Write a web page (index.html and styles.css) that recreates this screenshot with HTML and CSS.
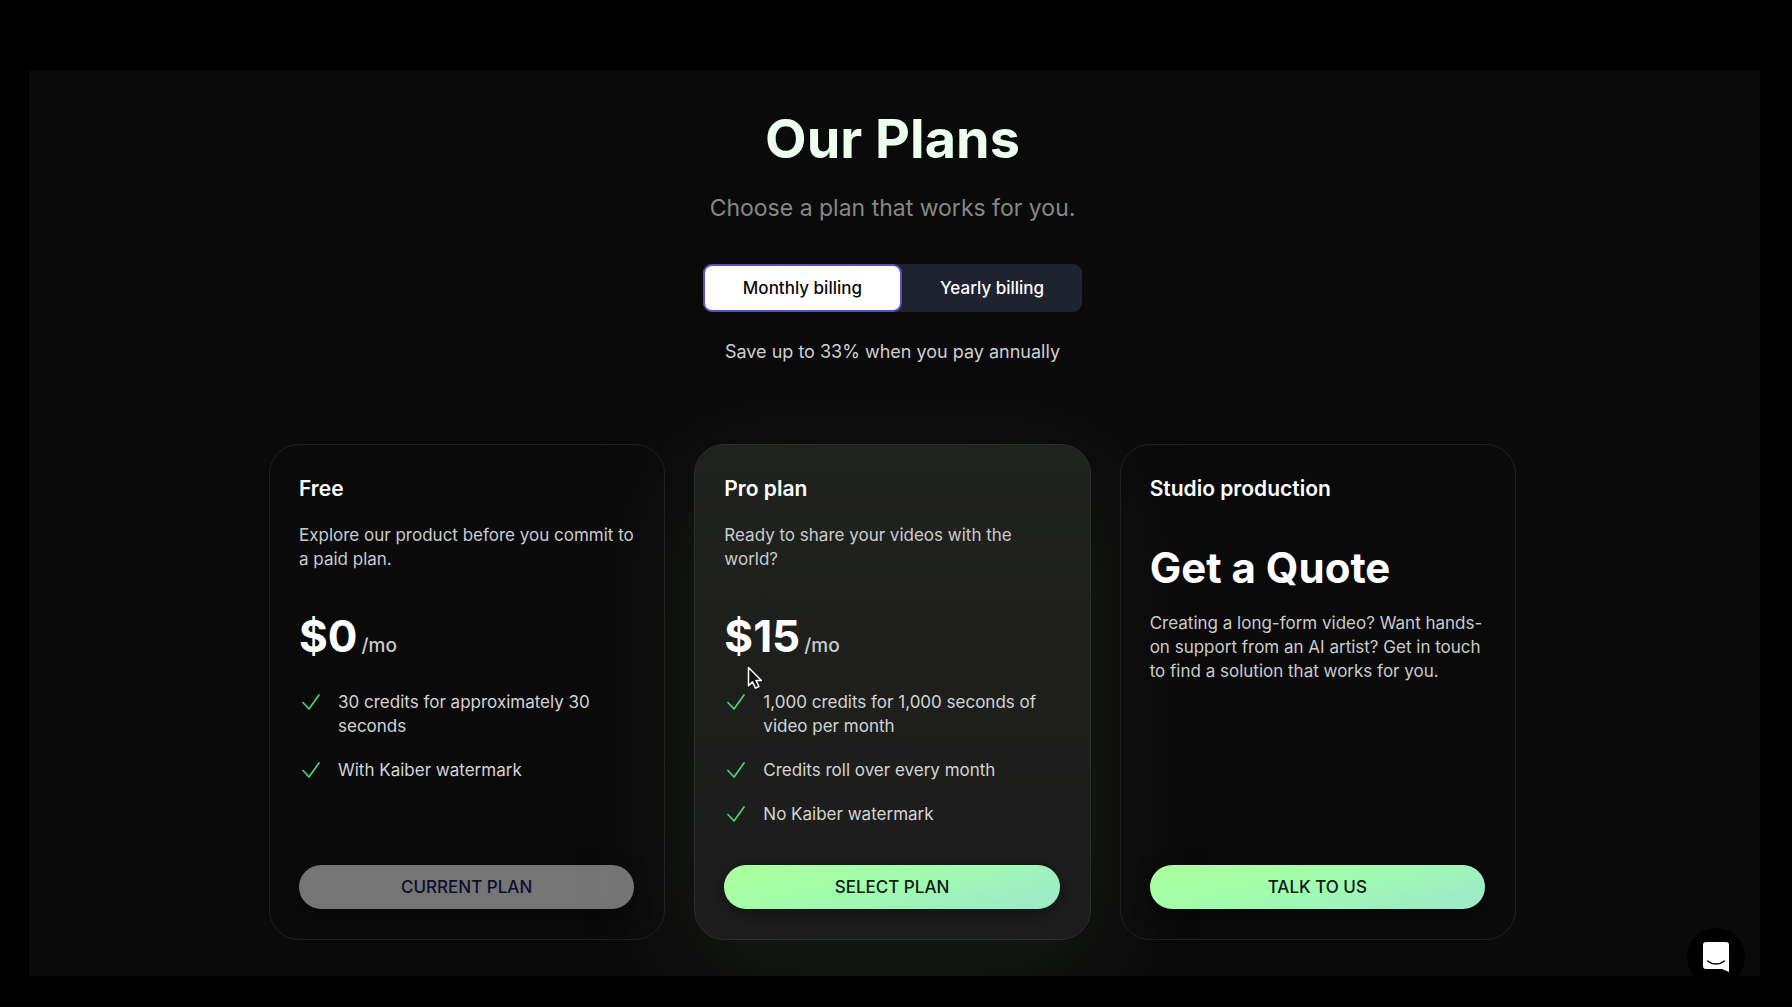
FILE: index.html
```html
<!DOCTYPE html>
<html lang="en">
<head>
    <meta charset="utf-8">
    <title>Our Plans - Kaiber</title>
    <meta name="viewport" content="width=device-width, initial-scale=1.0">
    <link rel="stylesheet" href="styles.css">
</head>
<body>

<svg width="0" height="0" class="sprite" aria-hidden="true">
    <symbol id="check" viewBox="0 0 24 24">
        <path d="M4 12.500l6 6.500L20 5" fill="none" stroke="currentColor" stroke-width="1.700" stroke-linecap="round" stroke-linejoin="round"/>
    </symbol>
</svg>

<main class="page">
    <header class="intro">
        <h1>Our Plans</h1>
        <p class="subtitle">Choose a plan that works for you.</p>
        <div class="billing">
            <button type="button" class="billing-btn active" aria-pressed="true">Monthly billing</button>
            <button type="button" class="billing-btn" aria-pressed="false">Yearly billing</button>
        </div>
        <p class="save">Save up to 33% when you pay annually</p>
    </header>

    <!-- Plans -->
    <div class="plans">
        <section class="card">
            <h2>Free</h2>
            <p class="desc">Explore our product before you commit to a paid plan.</p>
            <p class="price"><strong>$0</strong><span>/mo</span></p>
            <ul class="features">
                <li><svg class="check"><use href="#check"/></svg>30 credits for approximately 30 seconds</li>
                <li><svg class="check"><use href="#check"/></svg>With Kaiber watermark</li>
            </ul>
            <button type="button" class="btn btn-disabled" disabled>CURRENT PLAN</button>
        </section>

        <section class="card card-pro">
            <h2>Pro plan</h2>
            <p class="desc">Ready to share your videos with the world?</p>
            <p class="price"><strong>$15</strong><span>/mo</span></p>
            <ul class="features">
                <li><svg class="check"><use href="#check"/></svg>1,000 credits for 1,000 seconds of video per month</li>
                <li><svg class="check"><use href="#check"/></svg>Credits roll over every month</li>
                <li><svg class="check"><use href="#check"/></svg>No Kaiber watermark</li>
            </ul>
            <button type="button" class="btn">SELECT PLAN</button>
            <svg class="cursor" viewBox="0 0 16 24" aria-hidden="true">
                <path d="M1.5 1.5v18.2l4-3.8 3 6.2 3.4-1.6-2.900-6h5.400z" fill="#111" stroke="#fff" stroke-width="1.500" stroke-linejoin="round"/>
            </svg>
        </section>

        <section class="card">
            <h2>Studio production</h2>
            <p class="quote">Get a Quote</p>
            <p class="quote-desc">Creating a long-form video? Want hands-on support from an AI artist? Get in touch to find a solution that works for you.</p>
            <button type="button" class="btn">TALK TO US</button>
        </section>
    </div>

    <!-- Chat launcher -->
    <button type="button" class="chat" aria-label="Open chat">
        <svg viewBox="0 0 26 30" aria-hidden="true">
            <path d="M3 0h20a3 3 0 0 1 3 3v27l-7-3H3a3 3 0 0 1-3-3V3a3 3 0 0 1 3-3z" fill="#fff"/>
            <path d="M4.500 19c5 4 12 4 17 0" fill="none" stroke="#000" stroke-width="1.500" stroke-linecap="round"/>
        </svg>
    </button>
</main>

</body>
</html>
```
FILE: styles.css
```css
* {
    box-sizing: border-box;
}

body {
    margin: 0;
    min-height: 100vh;
    padding: 70px 32px 31px 29px;
    display: flex;
    background: #000;
    color: #fff;
    font-family: Inter, "Liberation Sans", sans-serif;
    font-size: 17px;
    line-height: 24px;
}

h1, h2, p, ul {
    margin: 0;
    padding: 0;
}

button {
    font-family: inherit;
    font-size: 17px;
    line-height: 24px;
    border: 0;
    cursor: pointer;
}

.sprite {
    position: absolute;
}

.page {
    position: relative;
    flex: 1;
    overflow: hidden;
    padding: 34px 4px 36px 0;
    background: #0a0a0a;
}

/* Heading */
.intro {
    display: flex;
    flex-direction: column;
    align-items: center;
    text-align: center;
}

h1 {
    font-size: 54px;
    line-height: 70px;
    font-weight: 700;
    color: #edffed;
}

.subtitle {
    margin-top: 18px;
    font-size: 23px;
    line-height: 32px;
    color: #858885;
}

.billing {
    display: flex;
    margin-top: 40px;
    border-radius: 9px;
    background: #1d232f;
}

.billing-btn {
    height: 48px;
    padding: 0 38px;
    border-radius: 9px;
    background: transparent;
    color: #fff;
    font-weight: 500;
}

.billing-btn.active {
    border: 2px solid #5b4fc4;
    background: #fff;
    color: #0a0a0a;
}

.save {
    margin-top: 26px;
    font-size: 18px;
    line-height: 28px;
    color: #cfcfd1;
}

/* Cards */
.plans {
    display: grid;
    grid-template-columns: repeat(3, 1fr);
    gap: 29px;
    max-width: 1247px;
    margin: 78px auto 0;
}

.card {
    position: relative;
    display: flex;
    flex-direction: column;
    min-height: 496px;
    padding: 28px 30px 30px 29px;
    border: 1px solid #1e1f1e;
    border-radius: 30px;
}

.card-pro {
    border-color: #2b2f2b;
    background: linear-gradient(#20221f, #1b1c1b);
    box-shadow: 0 32px 120px rgba(90, 115, 85, 0.18);
}

h2 {
    font-size: 21px;
    line-height: 32px;
    font-weight: 600;
}

.desc {
    margin-top: 18px;
    color: #cbcccb;
}

.price {
    display: flex;
    align-items: baseline;
    gap: 4px;
    margin-top: 37px;
    line-height: 56px;
}

.price strong {
    font-size: 44px;
    font-weight: 700;
}

.price span {
    font-size: 19px;
    font-weight: 500;
    color: #cbcccb;
}

.features {
    display: flex;
    flex-direction: column;
    gap: 20px;
    margin-top: 16px;
    list-style: none;
    color: #d3d4d3;
}

.features li {
    display: flex;
    gap: 15px;
}

.check {
    flex: none;
    width: 24px;
    height: 24px;
    color: #3fd873;
}

.quote {
    margin-top: 35px;
    font-size: 42px;
    line-height: 56px;
    font-weight: 700;
}

.quote-desc {
    margin-top: 15px;
    color: #cbcccb;
}

.btn {
    height: 44px;
    margin-top: auto;
    border-radius: 22px;
    background: linear-gradient(165deg, #aaff9f 10%, #a1fdae 45%, #9decc5 85%);
    box-shadow: 0 4px 20px rgba(0, 0, 0, 0.4);
    color: #0b1c12;
    font-weight: 500;
}

.btn-disabled {
    background: #757575;
    color: #0c1029;
    cursor: default;
}

/* Pointer over the pro card */
.cursor {
    position: absolute;
    left: 52px;
    top: 221px;
    width: 16px;
    height: 24px;
}

.chat {
    position: absolute;
    right: 15px;
    bottom: -10px;
    width: 58px;
    height: 58px;
    padding: 0;
    display: grid;
    place-items: center;
    border-radius: 50%;
    background: #000;
}

.chat svg {
    width: 26px;
    height: 30px;
}
```
